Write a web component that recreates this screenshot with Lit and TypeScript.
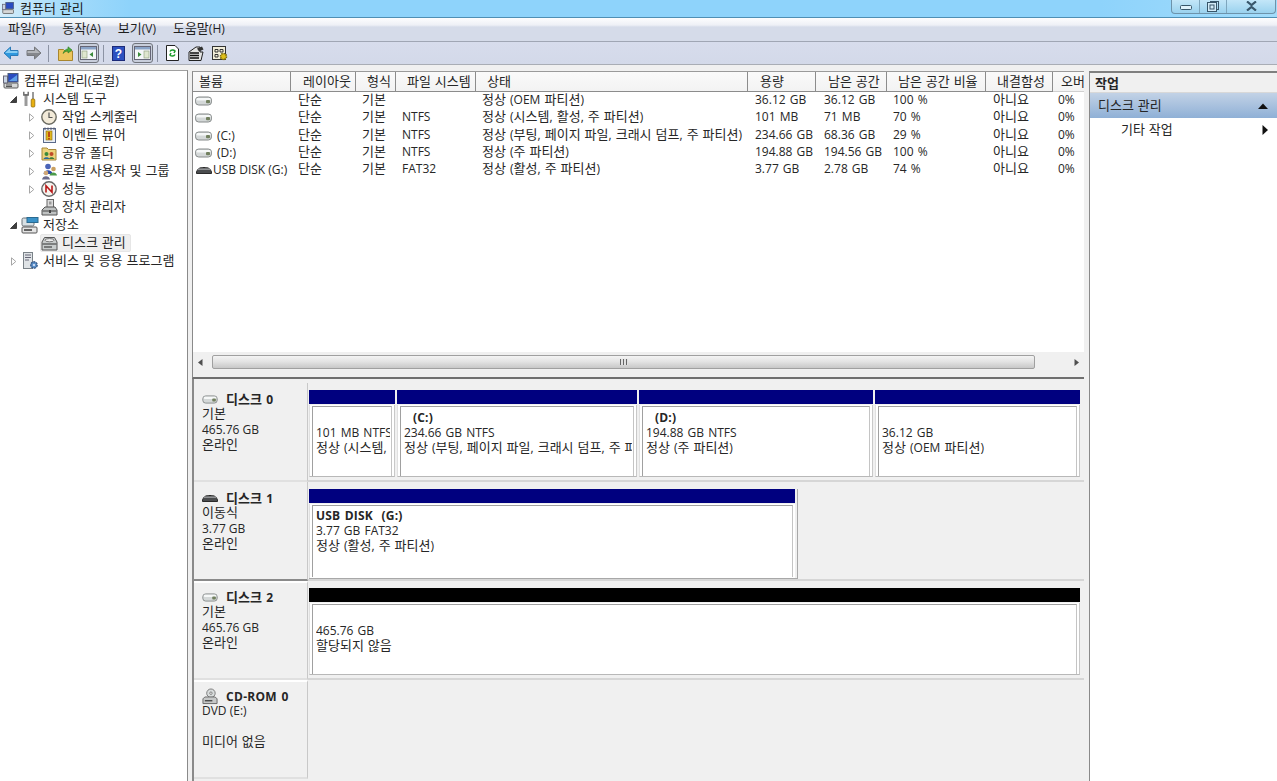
import { LitElement, html, css, svg } from "lit";
import { customElement } from "lit/decorators.js";

const k = (t: string) => {
  const parts = t.split(/([가-힣](?:[가-힣 ]*[가-힣])?)/);
  return parts.map((p, i) => (i % 2 ? html`<span class="ko">${p}</span>` : p));
};

const hdd = (w = 17, h = 10) => html`<svg class="ic" width=${w} height=${h} viewBox="0 0 17 10"><rect x="0.5" y="1" width="16" height="8" rx="3.2" fill="#d4d8d8" stroke="#868a8a"/><rect x="1.5" y="2" width="14" height="2.4" rx="1.2" fill="#f6f8f8"/><rect x="11" y="4" width="4" height="3.2" rx="1" fill="#72805f"/></svg>`;
const usb = (w = 16, h = 9) => html`<svg class="ic" width=${w} height=${h} viewBox="0 0 16 9"><path d="M0.5 6C2 2 4 1.5 8 1.5S14 2 15.5 6V7.5H0.5Z" fill="#4a4c4e" stroke="#2a2a2a"/><rect x="2" y="2.5" width="12" height="1.4" fill="#9a9c9e"/></svg>`;
const arrowR = html`<svg class="ic" width="7" height="9" viewBox="0 0 7 9"><path d="M1.5 0.8L5.8 4.5L1.5 8.2Z" fill="#fff" stroke="#a6a6a6"/></svg>`;
const arrowD = html`<svg class="ic" width="7" height="7" viewBox="0 0 7 7"><path d="M6.5 0.5V6.5H0.5Z" fill="#404040" stroke="#404040"/></svg>`;

const pcIcon = html`<svg width="17" height="17" viewBox="0 0 17 17"><rect x="5" y="0.5" width="10" height="8.5" fill="#2a4cc0" stroke="#4a5a7a"/><path d="M6 8L14 2V8Z" fill="#5fa0e8"/><rect x="1" y="10" width="14" height="5" rx="1" fill="#d6d8d8" stroke="#5a5a5a"/><path d="M3 12H9M3 13.5H9" stroke="#555" stroke-width="1"/><rect x="0.5" y="3" width="4" height="7" fill="#c8d4e4" stroke="#667"/></svg>`;
const toolsIcon = html`<svg width="16" height="17" viewBox="0 0 16 17"><path d="M4 3V15" stroke="#9a9a9a" stroke-width="3"/><path d="M1.800 .8V4H6.200V.8" fill="none" stroke="#666" stroke-width="1.4"/><path d="M11 1V8" stroke="#9a9a9a" stroke-width="2"/><rect x="9.2" y="8" width="3.6" height="8" rx="1" fill="#e8b010" stroke="#96700a" stroke-width=".8"/></svg>`;
const clockIcon = html`<svg width="16" height="16" viewBox="0 0 16 16"><circle cx="8" cy="8" r="7.2" fill="#f2ead8" stroke="#6a6a60" stroke-width="1.4"/><path d="M8 3.5V8.5H11.5" fill="none" stroke="#555" stroke-width="1.2"/></svg>`;
const eventIcon = html`<svg width="15" height="16" viewBox="0 0 15 16"><rect x="1.5" y="1.5" width="12" height="14" fill="#e8eef6" stroke="#5a6a8a"/><rect x="4" y="4" width="6" height="9" fill="#e0b820" stroke="#8a6a10" stroke-width=".6"/><path d="M7 5V10M7 11V12.4" stroke="#b02010" stroke-width="1.4"/><path d="M3 .5V3M6 .5V3M9 .5V3M12 .5V3" stroke="#556"/></svg>`;
const shareIcon = html`<svg width="16" height="16" viewBox="0 0 16 16"><path d="M1 3H6L7.5 4.5H15V15H1Z" fill="#ecd27c" stroke="#a88838"/><circle cx="5.5" cy="9" r="2" fill="#3a8a3a"/><path d="M2.5 14C3 11.5 8 11.5 8.5 14Z" fill="#2a6a9a"/><circle cx="10.5" cy="9" r="2" fill="#c04a2a"/><path d="M8 14C8.5 11.5 12.5 11.5 13.5 14Z" fill="#3a7a3a"/></svg>`;
const usersIcon = html`<svg width="17" height="17" viewBox="0 0 17 17"><circle cx="7" cy="3.5" r="2.8" fill="#4a64b8"/><path d="M2.5 11C3 6 11 6 11.5 11Z" fill="#2a48a8"/><circle cx="12.5" cy="6" r="2.3" fill="#caa060"/><path d="M8.5 12.5C9 8.5 15.5 8.5 16 12.5Z" fill="#4a9a4a"/><circle cx="5" cy="10" r="2.3" fill="#d0a878"/><path d="M1 16.5C1.5 12 8.5 12 9 16.5Z" fill="#6a6a8a"/></svg>`;
const perfIcon = html`<svg width="16" height="16" viewBox="0 0 16 16"><circle cx="8" cy="8" r="7.2" fill="#f6f4ee" stroke="#666" stroke-width="1.4"/><path d="M5 11.5V4.8L11 11.2V4.5" fill="none" stroke="#b81818" stroke-width="1.6"/></svg>`;
const deviceIcon = html`<svg width="17" height="17" viewBox="0 0 17 17"><rect x="6" y="0.5" width="6.5" height="8" fill="#dcdcdc" stroke="#666"/><rect x="8" y="2.5" width="2.5" height="3" fill="#9a9a9a"/><path d="M1 11L4 8H14L16 11V16H1Z" fill="#bfc2c2" stroke="#555"/><path d="M1.5 12H15.5" stroke="#444"/><rect x="8" y="11" width="2" height="3" fill="#444"/></svg>`;
const storageIcon = html`<svg width="18" height="17" viewBox="0 0 18 17"><rect x="1" y="1" width="12" height="8" rx="1.5" fill="#d8e0e4" stroke="#6a7278"/><rect x="6" y="0.5" width="11" height="5" fill="#3a92c8" stroke="#2a6a90"/><rect x="1" y="10" width="15" height="6" rx="1" fill="#e4e4e4" stroke="#555"/><path d="M3 13H11" stroke="#3a3a3a" stroke-width="1.5"/></svg>`;
const diskMgmtIcon = html`<svg width="17" height="15" viewBox="0 0 17 15"><path d="M1 6L3.5 1.5H13.5L16 6V14H1Z" fill="#c8cccc" stroke="#555"/><ellipse cx="8.5" cy="4.2" rx="4.5" ry="1.6" fill="#eee" stroke="#777"/><path d="M1.5 8H15.5" stroke="#333"/><path d="M3 11H11" stroke="#555" stroke-width="1.4"/></svg>`;
const svcIcon = html`<svg width="17" height="18" viewBox="0 0 17 18"><rect x="1.5" y="0.5" width="9" height="16" fill="#dfe3e6" stroke="#7a8288"/><path d="M3 3H9M3 5.5H9M3 8H7" stroke="#667" stroke-width="1"/><circle cx="12" cy="13" r="3.2" fill="#5a90c8" stroke="#3a5a88" stroke-dasharray="2 .8" stroke-width="1.4"/><circle cx="12" cy="13" r="1" fill="#eef"/></svg>`;
const cdIcon = html`<svg width="17" height="17" viewBox="0 0 17 17"><circle cx="9.5" cy="5" r="4.5" fill="#d8dcdc" stroke="#777"/><circle cx="9.5" cy="5" r="1.3" fill="#fff" stroke="#777"/><path d="M1 11L3 9H14L16 11V16H1Z" fill="#c6c8c8" stroke="#666"/><path d="M3 13H11" stroke="#444" stroke-width="1.4"/></svg>`;

const tree = [
  { lvl: 0, icon: pcIcon, text: "컴퓨터 관리(로컬)" },
  { lvl: 1, arrow: arrowD, icon: toolsIcon, text: "시스템 도구" },
  { lvl: 2, arrow: arrowR, icon: clockIcon, text: "작업 스케줄러" },
  { lvl: 2, arrow: arrowR, icon: eventIcon, text: "이벤트 뷰어" },
  { lvl: 2, arrow: arrowR, icon: shareIcon, text: "공유 폴더" },
  { lvl: 2, arrow: arrowR, icon: usersIcon, text: "로컬 사용자 및 그룹" },
  { lvl: 2, arrow: arrowR, icon: perfIcon, text: "성능" },
  { lvl: 2, icon: deviceIcon, text: "장치 관리자" },
  { lvl: 1, arrow: arrowD, icon: storageIcon, text: "저장소" },
  { lvl: 2, icon: diskMgmtIcon, text: "디스크 관리", sel: true },
  { lvl: 1, arrow: arrowR, icon: svcIcon, text: "서비스 및 응용 프로그램" },
];

const headers = ["볼륨", "레이아웃", "형식", "파일 시스템", "상태", "용량", "남은 공간", "남은 공간 비율", "내결함성", "오버"];
const rows = [
  ["", "단순", "기본", "", "정상 (OEM 파티션)", "36.12 GB", "36.12 GB", "100 %", "아니요", "0%"],
  ["", "단순", "기본", "NTFS", "정상 (시스템, 활성, 주 파티션)", "101 MB", "71 MB", "70 %", "아니요", "0%"],
  ["(C:)", "단순", "기본", "NTFS", "정상 (부팅, 페이지 파일, 크래시 덤프, 주 파티션)", "234.66 GB", "68.36 GB", "29 %", "아니요", "0%"],
  ["(D:)", "단순", "기본", "NTFS", "정상 (주 파티션)", "194.88 GB", "194.56 GB", "100 %", "아니요", "0%"],
  ["USB DISK (G:)", "단순", "기본", "FAT32", "정상 (활성, 주 파티션)", "3.77 GB", "2.78 GB", "74 %", "아니요", "0%"],
];

interface Part { w: number; name?: string; l2: string; l3: string; black?: boolean }
const disks: { icon: any; name: string; lines: string[]; parts: Part[]; cls?: string }[] = [
  { icon: hdd(16, 9), name: "디스크 0", lines: ["기본", "465.76 GB", "온라인"], parts: [
    { w: 88, l2: "101 MB NTFS", l3: "정상 (시스템, 활성, 주 파티션)" },
    { w: 242, name: "(C:)", l2: "234.66 GB NTFS", l3: "정상 (부팅, 페이지 파일, 크래시 덤프, 주 파티션)" },
    { w: 236, name: "(D:)", l2: "194.88 GB NTFS", l3: "정상 (주 파티션)" },
    { w: 207, l2: "36.12 GB", l3: "정상 (OEM 파티션)" },
  ] },
  { icon: usb(16, 9), name: "디스크 1", lines: ["이동식", "3.77 GB", "온라인"], parts: [
    { w: 489, name: "USB DISK  (G:)", l2: "3.77 GB FAT32", l3: "정상 (활성, 주 파티션)" },
  ], cls: "usbrow" },
  { icon: hdd(16, 9), name: "디스크 2", lines: ["기본", "465.76 GB", "온라인"], parts: [
    { w: 773, black: true, l2: "465.76 GB", l3: "할당되지 않음" },
  ], cls: "sel" },
  { icon: cdIcon, name: "CD-ROM 0", lines: ["DVD (E:)", "", "미디어 없음"], parts: [], cls: "sel last" },
];

@customElement("app-root")
export class AppRoot extends LitElement {
  static styles = css`
    :host { display: block; width: 1277px; height: 781px; overflow: hidden; position: relative; background: #f0f0f0;
      font-family: "Open Sans", "Noto Sans CJK KR", sans-serif; font-size: 12px; color: #262626; line-height: 16px; }
    * { box-sizing: border-box; }
    .ko { font-family: "Noto Sans CJK KR", sans-serif; font-size: 13px; line-height: 1; letter-spacing: 0; word-spacing: 1px; }
    .ic { flex: none; display: block; }
    .title { height: 18px; border-bottom: 1px solid #4f8fb4; display: flex; align-items: center; padding-left: 2px;
      background: linear-gradient(90deg, #d6eefb 0, #a6dcfa 60px, #8ed3fb 130px, #8ed3fb 1100px, #a2dcfb 100%); }
    .title .t { margin-left: 5px; color: #1c1c1c; }
    .wbtns { margin-left: auto; margin-right: 1px; width: 105px; height: 14px; margin-top: -4px; display: grid; grid-template-columns: 28px 27px 1fr;
      border: 1px solid #6d93ab; border-top: none; border-radius: 0 0 4px 4px; background: linear-gradient(#c3e6f8, #9ad2ee); }
    .wbtns div { display: flex; align-items: center; justify-content: center; border-right: 1px solid #7ea6bd; }
    .wbtns div:last-child { border-right: none; }
    .menu { height: 24px; display: flex; align-items: center; gap: 17px; padding: 0 0 2px 8px; border-bottom: 1px solid #a0a6b4;
      background: linear-gradient(#fdfdfe 0, #eef0f6 7px, #d5dbe9 9px, #d5dbe9 100%); color: #1e1e1e; }
    .tools { height: 23px; display: flex; align-items: center; padding-left: 3px; border-bottom: 1px solid #a9adb5;
      background: linear-gradient(#d7dcec, #d3d9e9); }
    .tools > * { flex: none; }
    .sep { width: 1px; height: 17px; background: #8c93a4; }
    .boxbtn { width: 21px; height: 20px; border: 1px solid #70747c; border-radius: 3px; background: #c8cedb; display: flex; align-items: center; justify-content: center; }
    .main { position: relative; height: 716px; display: flex; padding-top: 5px; }
    .tree { width: 188px; height: 711px; background: #fff; border-top: 1px solid #a0a0a0; border-right: 1px solid #8a8a8a; padding-top: 1px; flex: none; }
    .node { height: 18px; display: flex; align-items: center; white-space: nowrap; position: relative; }
    .node .arr { width: 10px; display: flex; justify-content: center; flex: none; }
    .node .icw { width: 18px; display: flex; justify-content: center; flex: none; }
    .node .txt { padding: 0 4px; }
    .l0 { padding-left: 2px; }
    .l1 { padding-left: 8px; }
    .l1 .arr { margin-right: 3px; }
    .l2 { padding-left: 26px; }
    .l2 .arr { margin-right: 4px; }
    .node.noarr.l2 { padding-left: 40px; }
    .selbg { position: absolute; left: 40px; top: 0; width: 91px; height: 18px; background: #efefef; border: 1px solid #e6e6e6; border-radius: 2px; }
    .node > :not(.selbg) { position: relative; }
    .center { margin-left: 4px; margin-top: 1px; width: 892px; flex: none; display: flex; flex-direction: column; }
    .list { height: 308px; flex: none; background: #fff; border-top: 1px solid #9a9a9a; border-bottom: 2px solid #6f6f6f; display: flex; flex-direction: column; border-left: 1px solid #8a8a8a; }
    .thead { height: 20px; display: grid; grid-template-columns: 98px 65px 40px 80px 272px 68px 71px 99px 67px 31px; background: linear-gradient(#fafafa, #f2f2f2); }
    .thead div { display: flex; align-items: center; padding: 0 0 2px 12px; border-right: 1px solid #8c8c8c; border-bottom: 1px solid #8c8c8c; white-space: nowrap; overflow: hidden; }
    .thead div:nth-child(3), .thead div:nth-child(4), .thead div:nth-child(5), .thead div:nth-child(8), .thead div:nth-child(9) { padding-left: 11px; }
    .thead div:first-child { padding-left: 6px; }
    .thead div:last-child { border-right: none; border-bottom-color: #d0d0d0; padding-left: 8px; }
    .tbody { flex: 1; }
    .tr { height: 17px; padding-bottom: 2px; display: grid; grid-template-columns: 105px 64px 40px 80px 273px 69px 69px 100px 65px 26px; align-items: center; white-space: nowrap; word-spacing: 1px; }
    .vol { display: flex; align-items: center; gap: 5px; padding: 2px 0 0 2px; }
    .vol.u { gap: 1px; padding-left: 3px; word-spacing: 0; }
    .hs { height: 25px; padding: 0 5px 5px; background: #f0f0f0; display: flex; align-items: center; }
    .thumb { margin-left: 9px; width: 823px; height: 14px; border: 1px solid #a0a0a0; border-radius: 2px; background: linear-gradient(#f4f4f4, #e4e4e4 45%, #c8c8c8); display: flex; align-items: center; justify-content: center; }
    .grip { width: 8px; height: 6px; background: repeating-linear-gradient(90deg, #666 0 1px, #e0e0e0 1px 3px); }
    .hs .r { margin-left: auto; }
    .disks { flex: 1; padding-top: 4px; border-left: 2px solid #8a8a8a; display: flex; flex-direction: column; min-height: 0; }
    .drow { display: flex; height: 99px; flex: none; }
    .dinfo { width: 114px; flex: none; padding: 8px 0 0 8px; background: #f0f0f0; border-right: 1px solid #c8c8c8; border-bottom: 2px solid #e0e0e0; }
    .drow.usbrow .dinfo { border-bottom: 2px solid #8a8a8a; }
    .drow.sel .dinfo { border-top: 2px solid #fff; padding-top: 6px; }
    .dname { display: flex; align-items: center; gap: 8px; font-weight: 700; height: 17px; margin-bottom: -2px; letter-spacing: .3px; word-spacing: 1px; }
    .dname .ic2 { width: 16px; display: flex; justify-content: center; flex: none; }
    .dline { height: 15.5px; }
    .parts { flex: 1; display: flex; padding: 7px 0 0 1px; border-bottom: 2px solid #d6d6d6; min-width: 0; }
    .drow.last .parts { border-bottom: none; }
    .seg { flex: none; height: 87px; display: flex; flex-direction: column; padding-right: 2px; }
    .seg .bar { height: 14px; background: #00007f; flex: none; }
    .seg.black .bar { background: #000; }
    .seg .box { height: 72px; margin-top: 1px; padding-left: 3px; background: #fff; border-right: 1px solid #c8c8c8; border-bottom: 1px solid #b8b8b8; border-left: 1px solid #e0e0e0; }
    .seg .inner { height: 70px; border-left: 1px solid #a0a0a0; border-top: 1px solid #a0a0a0; border-right: 1px solid #c4c4c4; margin: 1px 2px 0 -1px; padding: 3px 0 0 3px; white-space: nowrap; line-height: 15px; word-spacing: 1px; }
    .inner > div { overflow: hidden; height: 15px; margin-right: 1px; }
    .inner .nm { font-weight: 700; white-space: pre; letter-spacing: .2px; }
    .inner .nm.ind { padding-left: 9px; }
    .usbrow .seg { height: 90px; border-right: 1px solid #a8a8a8; border-bottom: 1px solid #a8a8a8; padding-right: 2px; }
    .usbrow .seg .box { height: 75px; border-right: none; border-bottom: none; }
    .usbrow .seg .inner { height: 72px; padding-top: 2px; }
    .actions { margin-left: 5px; margin-top: 1px; flex: 1; background: #fff; border-top: 2px solid #7f7f7f; border-left: 1px solid #8a8a8a; height: 710px; }
    .ahead { height: 20px; background: #f0f0f0; font-weight: 700; display: flex; align-items: center; padding: 0 0 1px 5px; border-bottom: 1px solid #d8d8d8; }
    .aband { height: 25px; background: linear-gradient(#c2d2e6, #8fb0d6); display: flex; align-items: center; padding: 0 9px 0 8px; justify-content: space-between; }
    .aitem { height: 24px; display: flex; align-items: center; padding: 0 9px 0 31px; justify-content: space-between; }
  `;

  private node(n: any) {
    return html`<div class="node l${n.lvl} ${n.arrow ? "" : "noarr"}">
      ${n.sel ? html`<div class="selbg"></div>` : ""}
      ${n.arrow ? html`<span class="arr">${n.arrow}</span>` : ""}
      <span class="icw">${n.icon}</span><span class="txt">${k(n.text)}</span></div>`;
  }

  private disk(d: (typeof disks)[number]) {
    return html`<div class="drow ${d.cls ?? ""}">
      <div class="dinfo">
        <div class="dname"><span class="ic2">${d.icon}</span><span>${k(d.name)}</span></div>
        ${d.lines.map((l) => html`<div class="dline">${k(l)}</div>`)}
      </div>
      <div class="parts">
        ${d.parts.map((p) => html`<div class="seg ${p.black ? "black" : ""}" style="width:${p.w}px">
          <div class="bar"></div>
          <div class="box"><div class="inner">
            <div class="nm ${p.name && p.name.startsWith("(") ? "ind" : ""}">${p.name ?? ""}</div>
            <div>${p.l2}</div><div>${k(p.l3)}</div>
          </div></div>
        </div>`)}
      </div>
    </div>`;
  }

  render() {
    return html`
      <div class="title">
        <svg width="13" height="13" viewBox="0 0 17 17">${svg`<rect x="5" y="0.5" width="10" height="8.5" fill="#2a4cc0" stroke="#4a5a7a"/><rect x="1" y="10" width="14" height="5" rx="1" fill="#d6d8d8" stroke="#5a5a5a"/><rect x="0.5" y="3" width="4" height="7" fill="#c8d4e4" stroke="#667"/>`}</svg>
        <span class="t">${k("컴퓨터 관리")}</span>
        <div class="wbtns">
          <div><svg width="12" height="7" viewBox="0 0 12 7"><rect x="0.5" y="2.5" width="11" height="4" rx="1" fill="#dff2fb" stroke="#38566a"/></svg></div>
          <div><svg width="12" height="11" viewBox="0 0 12 11"><rect x="3.5" y="0.5" width="8" height="8" fill="none" stroke="#38566a"/><rect x="0.5" y="1.5" width="9" height="9" fill="#d4ecf8" stroke="#38566a"/><rect x="3" y="4" width="4" height="4" fill="none" stroke="#38566a"/></svg></div>
          <div><svg width="13" height="10" viewBox="0 0 13 10"><path d="M2 0.5L6.5 4L11 0.5M2 9.5L6.5 6L11 9.5" fill="none" stroke="#38566a" stroke-width="2.2"/></svg></div>
        </div>
      </div>
      <div class="menu"><span>${k("파일(F)")}</span><span>${k("동작(A)")}</span><span>${k("보기(V)")}</span><span>${k("도움말(H)")}</span></div>
      <div class="tools">
        <svg width="16" height="14" viewBox="0 0 16 14" style="margin-right:7px"><path d="M1 7L7.5 1V4.5H15V9.5H7.5V13Z" fill="#2f98de" stroke="#2a7ab8"/><path d="M2.500 6.500L7 2.500V5H14.500V7H2.500Z" fill="#86cdf4"/></svg>
        <svg width="16" height="14" viewBox="0 0 16 14"><path d="M15 7L8.5 1V4.5H1V9.5H8.5V13Z" fill="#85878c" stroke="#76787c"/><path d="M13.500 6.500L9 2.500V5H1.500V7H13.500Z" fill="#b4b6ba"/></svg>
        <div class="sep" style="margin:0 9px 0 6px"></div>
        <svg width="15" height="15" viewBox="0 0 15 15"><path d="M.5 3.5H5.5L7 5H14.5V14.5H.5Z" fill="#ecc55c" stroke="#a8862e"/><path d="M5 7.5C6 4.5 8 3 10 3V.8L14 4L10 7V5C8 5 6.500 6 5 7.5Z" fill="#4cae3c" stroke="#2a7a20" stroke-width=".6"/></svg>
        <div class="boxbtn" style="margin-left:5px"><svg width="17" height="14" viewBox="0 0 17 14"><rect x="0.5" y="0.5" width="16" height="13" fill="#f4f6f8" stroke="#667"/><rect x="1" y="1" width="15" height="2.500" fill="#8aa4c8"/><rect x="2" y="5" width="5" height="7" fill="#dfe6cf" stroke="#8a9a7a" stroke-width=".6"/><path d="M13 6V11L9.500 8.500Z" fill="#3a8a3a"/></svg></div>
        <div class="sep" style="margin:0 8px 0 4px"></div>
        <svg width="13" height="15" viewBox="0 0 13 15"><rect x="0.500" y="0.500" width="12" height="14" fill="#2c50c0" stroke="#1c2a78"/><text x="6.500" y="12" text-anchor="middle" font-family="Liberation Sans" font-weight="700" font-size="12" fill="#fff">?</text></svg>
        <div class="boxbtn" style="margin-left:7px"><svg width="17" height="14" viewBox="0 0 17 14"><rect x="0.5" y="0.5" width="16" height="13" fill="#f4f6f8" stroke="#667"/><rect x="1" y="1" width="15" height="2.500" fill="#8aa4c8"/><rect x="10" y="5" width="5" height="7" fill="#dfe6cf" stroke="#8a9a7a" stroke-width=".6"/><path d="M4 6V11L7.500 8.500Z" fill="#3a8a3a"/></svg></div>
        <div class="sep" style="margin:0 8px 0 4px"></div>
        <svg width="13" height="16" viewBox="0 0 13 16"><path d="M.5 .5H9L12.500 4V15.500H.5Z" fill="#fff" stroke="#222"/><path d="M4 6.500A3 3 0 0 1 9 6L8 8M9 9.500A3 3 0 0 1 4 10L5 8" fill="none" stroke="#1a9a2a" stroke-width="1.500"/></svg>
        <svg width="16" height="15" viewBox="0 0 16 15" style="margin-left:9px"><path d="M1 6L8 1H12V6H15L13 14.500H1Z" fill="#e4e4e4" stroke="#222"/><path d="M2 7H11M2 9.500H11M2 12H11" stroke="#111" stroke-width="1.300"/><path d="M9 2.500L14 .5L15.500 3.500L11 5.500Z" fill="#333"/></svg>
        <svg width="16" height="15" viewBox="0 0 16 15" style="margin-left:8px"><rect x="0.500" y="0.500" width="13" height="13" fill="#f2eeda" stroke="#333"/><path d="M3 3.500H6V6H3ZM8 3.500H11V6H8ZM3 8.500H6V11H3Z" fill="none" stroke="#333"/><circle cx="11.500" cy="10.500" r="3" fill="#e0c018" stroke="#7a6a10" stroke-dasharray="1.500 .8" stroke-width="1.600"/></svg>
      </div>
      <div class="main">
        <div class="tree">${tree.map((n) => this.node(n))}</div>
        <div class="center">
          <div class="list">
            <div class="thead">${headers.map((h) => html`<div>${k(h)}</div>`)}</div>
            <div class="tbody">
              ${rows.map((r, i) => html`<div class="tr">
                <div class="vol ${i === 4 ? "u" : ""}">${i === 4 ? usb() : hdd()}<span>${r[0]}</span></div>
                ${r.slice(1).map((c) => html`<div>${k(c)}</div>`)}
              </div>`)}
            </div>
            <div class="hs">
              <svg class="ic" width="5" height="7" viewBox="0 0 5 7"><path d="M4.500 0V7L0 3.500Z" fill="#505050"/></svg>
              <div class="thumb"><div class="grip"></div></div>
              <svg class="ic r" width="5" height="7" viewBox="0 0 5 7"><path d="M0.500 0V7L5 3.500Z" fill="#505050"/></svg>
            </div>
          </div>
          <div class="disks">${disks.map((d) => this.disk(d))}</div>
        </div>
        <div class="actions">
          <div class="ahead">${k("작업")}</div>
          <div class="aband"><span>${k("디스크 관리")}</span><svg width="10" height="6" viewBox="0 0 10 6"><path d="M0 6L5 0.500L10 6Z" fill="#111"/></svg></div>
          <div class="aitem"><span>${k("기타 작업")}</span><svg width="6" height="10" viewBox="0 0 6 10"><path d="M0.500 0L6 5L0.500 10Z" fill="#111"/></svg></div>
        </div>
      </div>
    `;
  }
}
